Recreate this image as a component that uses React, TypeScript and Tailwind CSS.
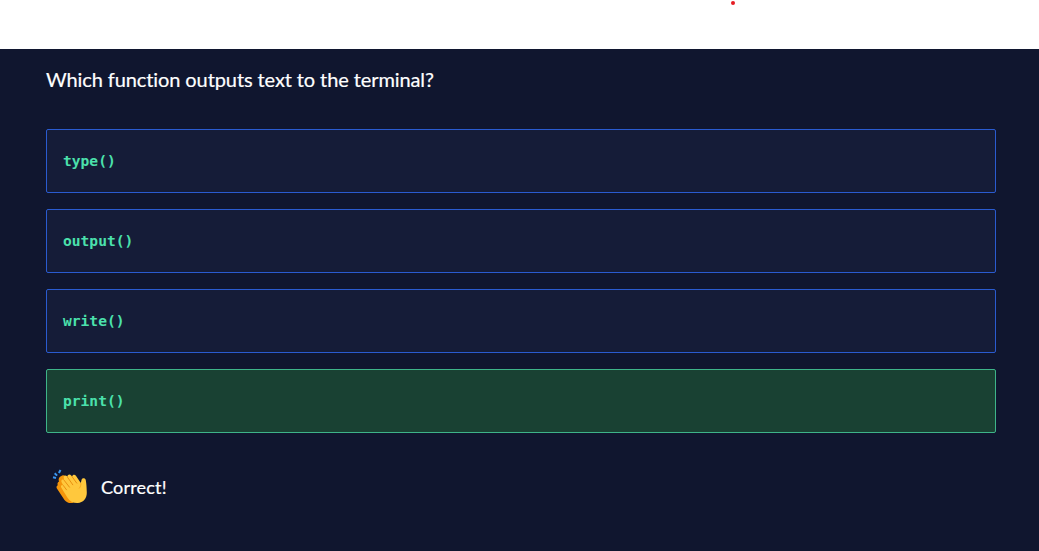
import React from "react";

const answers = [
  { label: "type()", correct: false },
  { label: "output()", correct: false },
  { label: "write()", correct: false },
  { label: "print()", correct: true },
];

function ClapIcon() {
  return (
    <svg width="36" height="36" viewBox="0 0 36 36" aria-hidden="true">
      <g stroke="#3a97f2" strokeWidth="2">
        <path d="M1 9.3l3 .7" />
        <path d="M2.7 5.2l2.4 2.4" />
        <path d="M6.9 4.9l1.6-2.9" />
      </g>
      <path
        d="M9 8.3c1.3-1.5 3.2-1.3 4.3-.3l14 11-6 15.8c-3.5.8-6.8-.1-8.8-2.8L4.9 20.6c-.9-1.6-.2-3 .9-3.3-.8-1.8 0-3.5 1.3-3.9C6 11.3 7.3 9 9 8.3z"
        fill="#f4950b"
      />
      <path
        d="M9.2 19.5c-1-1.7.8-3.2 2.1-2L9.6 14.3c-1-2 1-3.8 2.6-2.1L11.8 10c-.7-2.2 1.6-3.5 3-1.9l.6.6c0-2.2 2.5-2.8 3.8-1.3l.9 1c.5-2 2.8-2.2 4-.5l4.7 7.1.7-3c.4-2.4 3.8-2.3 4.3.2.6 3.4.9 7.4 1 12.6.1 5.9-3.8 10-9 10.2-4.4.2-8-1.4-10.3-5.2z"
        fill="#ffc83d"
      />
      <path
        d="M12.2 12.4l5.3 6.8M15.5 9.2l5.3 7.6M20.1 8.7l4.7 6.5M11.3 17.5l3.2 4.3"
        fill="none"
        stroke="#e99011"
        strokeWidth="1"
        strokeLinecap="round"
      />
      <path
        d="M28.8 15.2c.3 2-.2 3.4-1.5 5"
        fill="none"
        stroke="#f4a21a"
        strokeWidth=".8"
        strokeLinecap="round"
      />
    </svg>
  );
}

export default function App() {
  return (
    <div className="flex h-[551px] w-full flex-col overflow-hidden bg-white font-['Lato',sans-serif] text-white">
      <header className="flex h-[49px] shrink-0 items-start pl-[731px] pt-px">
        <span className="size-1 rounded-full bg-[#e51c23]" />
      </header>
      <main className="grow bg-[#10162f] pl-[46px] pr-[43px] pt-3.5">
        <h1 className="h-8 whitespace-nowrap text-xl leading-8 tracking-[-0.1px] [-webkit-text-stroke:0.2px_white]">
          Which function outputs text to the terminal?
        </h1>
        <ul className="mt-[34px] flex flex-col gap-4">
          {answers.map((a) => (
            <li
              key={a.label}
              className={`flex h-16 items-center rounded-xs border pl-4 font-['DejaVu_Sans_Mono',monospace] text-[14.6px] font-bold text-[#4be1ac] ${
                a.correct ? "border-[#3eb489] bg-[#194133]" : "border-[#2a5bd0] bg-[#151c38]"
              }`}
            >
              {a.label}
            </li>
          ))}
        </ul>
        <div className="mt-[35px] flex h-9 items-center gap-[13px] pl-[6px]">
          <ClapIcon />
          <span className="mt-0.5 text-lg leading-6 tracking-[0.2px] [-webkit-text-stroke:0.2px_white]">Correct!</span>
        </div>
      </main>
    </div>
  );
}
